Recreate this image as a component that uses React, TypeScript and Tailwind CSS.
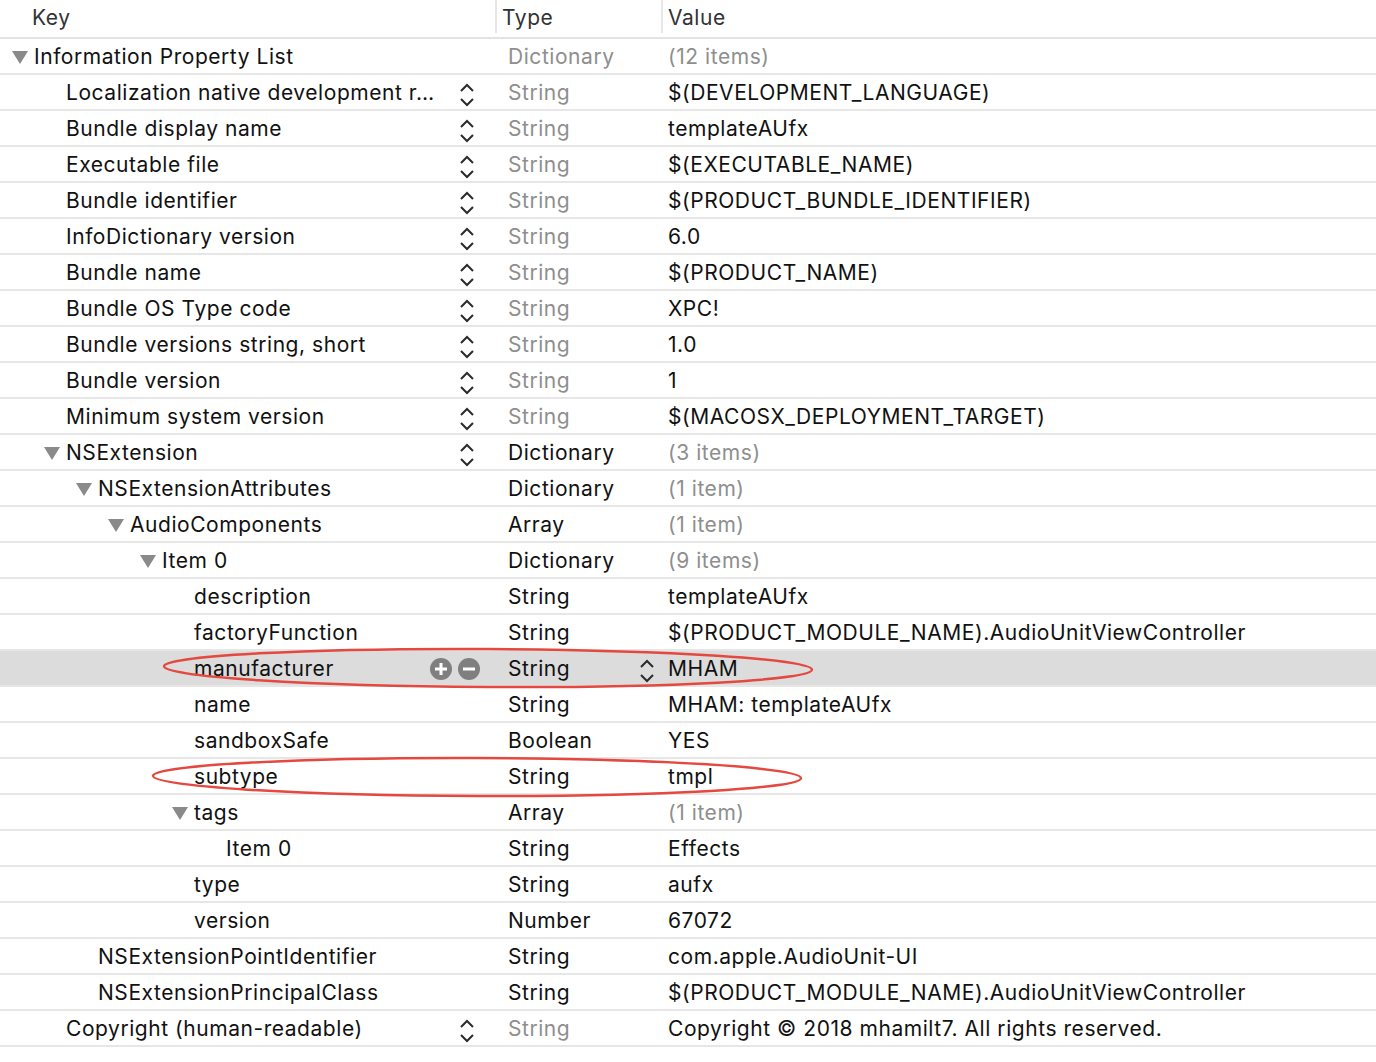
import React from "react";

type Row = {
  key: string;
  level: number;
  tri?: boolean;
  type: string;
  typeGray?: boolean;
  value: string;
  valueGray?: boolean;
  stepper?: boolean;
  selected?: boolean;
};

const rows: Row[] = [
  { key: "Information Property List", level: 0, tri: true, type: "Dictionary", typeGray: true, value: "(12 items)", valueGray: true },
  { key: "Localization native development r\u2026", level: 1, stepper: true, type: "String", typeGray: true, value: "$(DEVELOPMENT_LANGUAGE)" },
  { key: "Bundle display name", level: 1, stepper: true, type: "String", typeGray: true, value: "templateAUfx" },
  { key: "Executable file", level: 1, stepper: true, type: "String", typeGray: true, value: "$(EXECUTABLE_NAME)" },
  { key: "Bundle identifier", level: 1, stepper: true, type: "String", typeGray: true, value: "$(PRODUCT_BUNDLE_IDENTIFIER)" },
  { key: "InfoDictionary version", level: 1, stepper: true, type: "String", typeGray: true, value: "6.0" },
  { key: "Bundle name", level: 1, stepper: true, type: "String", typeGray: true, value: "$(PRODUCT_NAME)" },
  { key: "Bundle OS Type code", level: 1, stepper: true, type: "String", typeGray: true, value: "XPC!" },
  { key: "Bundle versions string, short", level: 1, stepper: true, type: "String", typeGray: true, value: "1.0" },
  { key: "Bundle version", level: 1, stepper: true, type: "String", typeGray: true, value: "1" },
  { key: "Minimum system version", level: 1, stepper: true, type: "String", typeGray: true, value: "$(MACOSX_DEPLOYMENT_TARGET)" },
  { key: "NSExtension", level: 1, tri: true, stepper: true, type: "Dictionary", value: "(3 items)", valueGray: true },
  { key: "NSExtensionAttributes", level: 2, tri: true, type: "Dictionary", value: "(1 item)", valueGray: true },
  { key: "AudioComponents", level: 3, tri: true, type: "Array", value: "(1 item)", valueGray: true },
  { key: "Item 0", level: 4, tri: true, type: "Dictionary", value: "(9 items)", valueGray: true },
  { key: "description", level: 5, type: "String", value: "templateAUfx" },
  { key: "factoryFunction", level: 5, type: "String", value: "$(PRODUCT_MODULE_NAME).AudioUnitViewController" },
  { key: "manufacturer", level: 5, type: "String", value: "MHAM", selected: true },
  { key: "name", level: 5, type: "String", value: "MHAM: templateAUfx" },
  { key: "sandboxSafe", level: 5, type: "Boolean", value: "YES" },
  { key: "subtype", level: 5, type: "String", value: "tmpl" },
  { key: "tags", level: 5, tri: true, type: "Array", value: "(1 item)", valueGray: true },
  { key: "Item 0", level: 6, type: "String", value: "Effects" },
  { key: "type", level: 5, type: "String", value: "aufx" },
  { key: "version", level: 5, type: "Number", value: "67072" },
  { key: "NSExtensionPointIdentifier", level: 2, type: "String", value: "com.apple.AudioUnit-UI" },
  { key: "NSExtensionPrincipalClass", level: 2, type: "String", value: "$(PRODUCT_MODULE_NAME).AudioUnitViewController" },
  { key: "Copyright (human-readable)", level: 1, stepper: true, type: "String", typeGray: true, value: "Copyright \u00a9 2018 mhamilt7. All rights reserved." },
];

const indent = ["pl-[34px]", "pl-[66px]", "pl-[98px]", "pl-[130px]", "pl-[162px]", "pl-[194px]", "pl-[226px]"];

function Triangle() {
  return (
    <svg width="22" height="16" viewBox="0 0 22 16" className="-ml-[22px] shrink-0">
      <polygon points="0,2 16,2 8,15" fill="#8a8a8a" />
    </svg>
  );
}

function Stepper() {
  return (
    <svg width="16" height="26" viewBox="0 0 16 26" className="shrink-0 mt-[4px]">
      <polyline points="2,9 8,3 14,9" fill="none" stroke="#2b2b2b" strokeWidth="2" />
      <polyline points="2,17 8,23 14,17" fill="none" stroke="#2b2b2b" strokeWidth="2" />
    </svg>
  );
}

function PlusMinus() {
  return (
    <div className="flex items-center gap-[6px]">
      <svg width="22" height="22" viewBox="0 0 22 22">
        <circle cx="11" cy="11" r="11" fill="#7f7f7f" />
        <rect x="5" y="9.5" width="12" height="3" fill="#fff" />
        <rect x="9.5" y="5" width="3" height="12" fill="#fff" />
      </svg>
      <svg width="22" height="22" viewBox="0 0 22 22">
        <circle cx="11" cy="11" r="11" fill="#7f7f7f" />
        <rect x="5" y="9.5" width="12" height="3" fill="#fff" />
      </svg>
    </div>
  );
}

export default function App() {
  return (
    <div
      className="relative w-[1376px] h-[1062px] bg-white overflow-hidden text-[21px] tracking-[0.55px] text-[#111]"
      style={{ fontFamily: "Inter, 'Helvetica Neue', 'Liberation Sans', sans-serif" }}
    >
      <div className="grid grid-cols-[495px_166px_1fr] h-[39px] border-b-2 border-[#e3e3e3] text-[#333]">
        <div className="pl-[32px] flex items-start pt-[2px]">Key</div>
        <div className="pl-[5px] flex items-start pt-[2px] border-l-2 border-[#e6e6e6] h-[33px]">Type</div>
        <div className="pl-[5px] flex items-start pt-[2px] border-l-2 border-[#e6e6e6] h-[33px]">Value</div>
      </div>
      {rows.map((r, i) => (
        <div
          key={i}
          className={
            "grid grid-cols-[495px_166px_1fr] h-[36px] pt-[1px] border-b-2 border-[#e6e6e6] " +
            (r.selected ? "bg-[#dcdcdc]" : "bg-white")
          }
        >
          <div className={"flex items-center pr-[20px] " + indent[r.level]}>
            {r.tri && <Triangle />}
            <span className="flex-1 whitespace-nowrap">{r.key}</span>
            {r.stepper && <Stepper />}
            {r.selected && <div className="-mr-[5px]"><PlusMinus /></div>}
          </div>
          <div className={"flex items-center pl-[13px] pr-[6px] " + (r.typeGray ? "text-[#8e8e8e]" : "text-[#111]")}>
            <span className="flex-1">{r.type}</span>
            {r.selected && <Stepper />}
          </div>
          <div className={"flex items-center pl-[7px] whitespace-nowrap " + (r.valueGray ? "text-[#8e8e8e]" : "text-[#111]")}>
            {r.value}
          </div>
        </div>
      ))}
      <svg className="absolute left-0 top-0 pointer-events-none" width="1376" height="1062">
        <ellipse cx="488" cy="668" rx="324" ry="19" fill="none" stroke="#e5483e" strokeWidth="2.5" transform="rotate(0.3 488 668)" />
        <ellipse cx="477" cy="777" rx="324" ry="19" fill="none" stroke="#e5483e" strokeWidth="2.5" transform="rotate(0.2 477 777)" />
      </svg>
    </div>
  );
}
